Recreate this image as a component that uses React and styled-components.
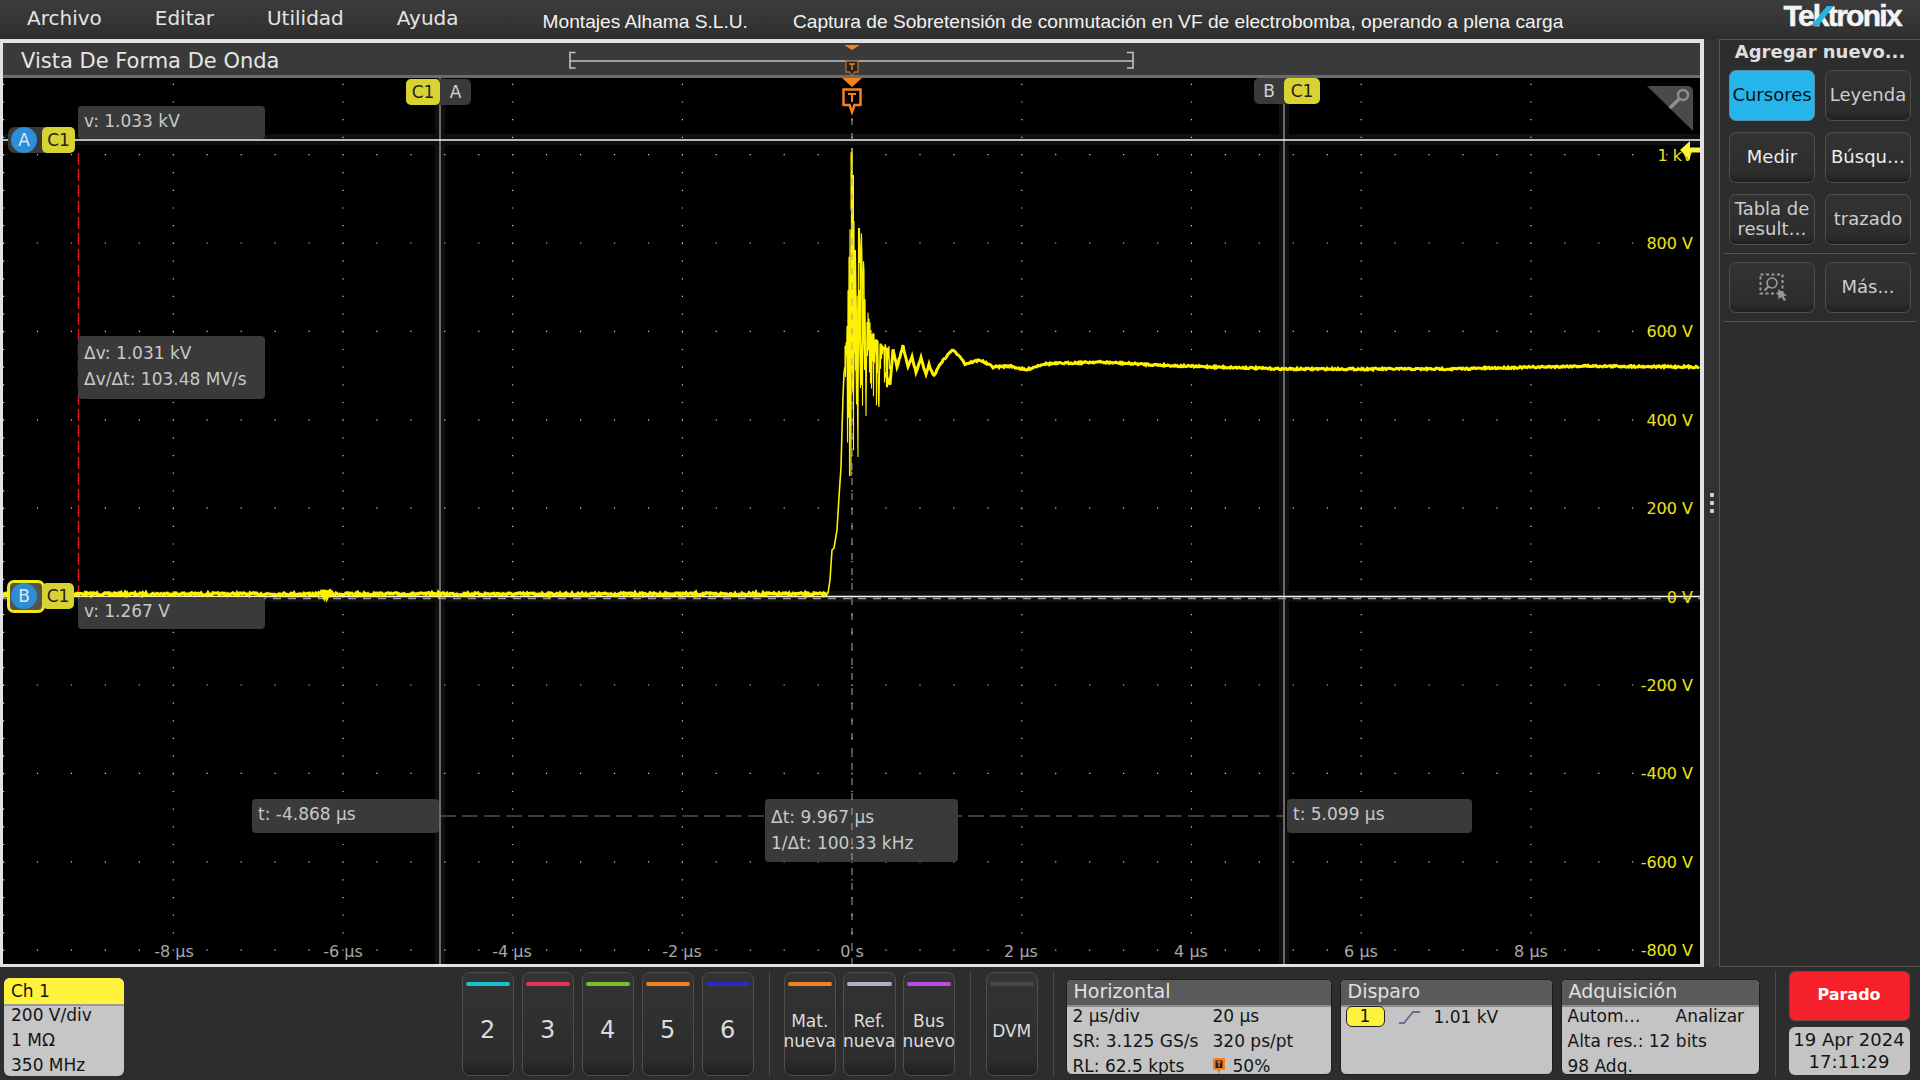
import React from "react";
import styled, { createGlobalStyle } from "styled-components";

const GlobalStyle = createGlobalStyle`
  html, body {
    margin: 0;
    padding: 0;
    background: #2d2d2d;
  }
  body {
    font-family: "DejaVu Sans", "Liberation Sans", sans-serif;
  }
`;

const Screen = styled.div`
  width: 1920px;
  height: 1080px;
  display: grid;
  grid-template-rows: 39px 928px 113px;
  background: #2d2d2d;
  overflow: hidden;
`;

const TopBar = styled.div`
  display: flex;
  align-items: center;
  padding-left: 27px;
  background: linear-gradient(#3d3d3d, #2e2e2e);
`;

const Menu = styled.div`
  display: flex;
  flex: none;
  gap: 53px;
  margin-bottom: 4px;
  font-size: 20px;
  color: #e4e4e4;
`;

const ShotTitle = styled.div`
  flex: none;
  margin-left: ${(p) => p.$gap}px;
  margin-top: 4px;
  font-family: "Liberation Sans", Arial, sans-serif;
  font-size: 19.15px;
  color: #f2f2f2;
  white-space: nowrap;
`;

const Logo = styled.div`
  position: relative;
  flex: none;
  margin-left: auto;
  margin-right: 17px;
  margin-bottom: 8px;
  padding-right: 2px;
  font-family: "Liberation Sans", Arial, sans-serif;
  font-weight: 700;
  font-size: 30px;
  letter-spacing: -1.7px;
  line-height: 31px;
  color: #f4f4f4;
  -webkit-text-stroke: 0.5px #f4f4f4;
  white-space: nowrap;
`;

const LogoSlash = styled.span`
  position: absolute;
  left: 36px;
  top: 6px;
  width: 7px;
  height: 20px;
  background: #27b4e4;
  transform: skewX(-38deg);
`;

const Main = styled.div`
  display: flex;
  height: 928px;
`;

const WaveFrame = styled.div`
  width: 1697px;
  height: 921px;
  border-style: solid;
  border-color: #e2e2e6;
  border-width: 4px 4px 3px 3px;
  display: flex;
  flex-direction: column;
`;

const ViewTitle = styled.div`
  position: relative;
  flex: none;
  height: 32px;
  padding-left: 18px;
  line-height: 37px;
  font-size: 21px;
  color: #e6e6e6;
  background: #3a3a3a;
  border-bottom: 3px solid #6c6c6c;
`;

const OverlaySvg = styled.svg`
  position: absolute;
  left: 0;
  top: 0;
  pointer-events: none;
`;

const Plot = styled.div`
  position: relative;
  flex: 1;
  background: #000;
  overflow: hidden;
`;

const Readout = styled.div`
  position: absolute;
  left: ${(p) => p.$x - 3}px;
  top: ${(p) => p.$y - 78}px;
  width: ${(p) => p.$w}px;
  height: ${(p) => p.$h}px;
  padding: ${(p) => p.$pt}px 6px 0;
  box-sizing: border-box;
  background: #3a3a3a;
  border-radius: 4px;
  font-size: 17px;
  line-height: 26px;
  color: #c8c8c8;
  white-space: nowrap;
`;

const FlagTab = styled.div`
  position: absolute;
  left: ${(p) => p.$x - 3}px;
  top: ${(p) => p.$y - 78}px;
  width: ${(p) => p.$w}px;
  height: 26px;
  background: ${(p) => (p.$channel ? "#d9d233" : "#3a3a3a")};
  color: ${(p) => (p.$channel ? "#222" : "#cfd4dc")};
  border-radius: 5px;
  font-size: 17px;
  line-height: 26px;
  text-align: center;
`;

const FlagBack = styled.div`
  position: absolute;
  left: ${(p) => p.$x - 3}px;
  top: ${(p) => p.$y - 78}px;
  width: ${(p) => p.$w}px;
  height: ${(p) => p.$h}px;
  box-sizing: border-box;
  background: ${(p) => (p.$active ? "#55554a" : "#3a3a3a")};
  border: ${(p) => (p.$active ? "3px solid #f2ea1a" : "none")};
  border-radius: 7px;
`;

const FlagDot = styled.div`
  position: absolute;
  left: ${(p) => p.$x - 13 - 3}px;
  top: ${(p) => p.$y - 13 - 78}px;
  width: 26px;
  height: 26px;
  border-radius: 50%;
  background: #2d8ed6;
  color: #dfe8f2;
  font-size: 17px;
  line-height: 26px;
  text-align: center;
`;

const VoltLabel = styled.div`
  position: absolute;
  right: 7px;
  top: ${(p) => p.$y - 78}px;
  transform: translateY(-50%);
  font-size: 16px;
  color: #eee21a;
  white-space: nowrap;
`;

const TimeLabel = styled.div`
  position: absolute;
  left: ${(p) => p.$x - 3}px;
  top: 873px;
  transform: translate(-50%, -50%);
  font-size: 16px;
  color: #a8a8a8;
  white-space: nowrap;
`;

const Gutter = styled.div`
  width: 15px;
  height: 928px;
  background: #333;
  display: flex;
  flex-direction: column;
  align-items: center;
  justify-content: center;
  gap: 4px;
`;

const GutterDot = styled.span`
  width: 4px;
  height: 4px;
  border-radius: 1px;
  background: #d0d0d0;
`;

const SidePanel = styled.div`
  flex: 1;
  box-sizing: border-box;
  border: 1px solid #5a5650;
  border-right: none;
  background: #2d2d2d;
`;

const SideTitle = styled.div`
  height: 30px;
  line-height: 23px;
  text-align: center;
  font-weight: 700;
  font-size: 18px;
  color: #dedede;
  white-space: nowrap;
`;

const SideGrid = styled.div`
  display: grid;
  grid-template-columns: 86px 86px;
  grid-auto-rows: 51px;
  column-gap: 10px;
  row-gap: 11px;
  padding-left: 9px;
`;

const SideButton = styled.div`
  display: flex;
  align-items: center;
  justify-content: center;
  box-sizing: border-box;
  padding-bottom: 2px;
  text-align: center;
  font-size: 18px;
  line-height: 20px;
  border-radius: 7px;
  border: 1.5px solid ${(p) => (p.$active ? "#5a8ca8" : "#524e4a")};
  background: ${(p) =>
    p.$active ? "#25b5ea" : "linear-gradient(#333 0%, #2d2d2d 82%, #1f1f1f 100%)"};
  color: ${(p) => (p.$active ? "#06121a" : p.$bright ? "#ededed" : "#cdcdcd")};
  white-space: nowrap;
  overflow: hidden;
`;

const SideRule = styled.div`
  height: 1px;
  margin: 8px 4px;
  background: #5a5650;
`;

const BottomBar = styled.div`
  display: flex;
  align-items: flex-start;
  padding: 5px 0 0 4px;
`;

const ChannelBadge = styled.div`
  width: 120px;
  height: 98px;
  margin-top: 6px;
  border-radius: 6px;
  overflow: hidden;
  background: #c6c6c6;
  color: #141414;
  font-size: 17px;
`;

const BadgeHeader = styled.div`
  height: 26px;
  line-height: 26px;
  padding-left: 7px;
  background: #fff23c;
  border-bottom: 2px solid #9a9a9a;
`;

const InfoRow = styled.div`
  display: grid;
  grid-template-columns: ${(p) => p.$cols || "1fr"};
  height: 25px;
  line-height: 25px;
  white-space: nowrap;
`;

const BadgeBody = styled.div`
  padding-left: 7px;
  margin-top: -3px;
`;

const Group = styled.div`
  display: flex;
  gap: ${(p) => p.$gap}px;
  margin-left: ${(p) => p.$left || 0}px;
`;

const Divider = styled.div`
  width: 1px;
  height: 104px;
  margin: 0 ${(p) => p.$after}px 0 ${(p) => p.$before}px;
  background: #4c4c4c;
`;

const AddButton = styled.div`
  position: relative;
  box-sizing: border-box;
  width: 52.5px;
  height: 104px;
  border-radius: 8px;
  border: 1.5px solid #524e4a;
  background: linear-gradient(#333 0%, #2d2d2d 85%, #1f1f1f 100%);
  color: #dcdcdc;
  display: flex;
  align-items: center;
  justify-content: center;
  padding-top: ${(p) => (p.$big ? 12 : 14)}px;
  text-align: center;
  font-size: ${(p) => (p.$big ? 24 : 17)}px;
  line-height: 20px;
  overflow: visible;
`;

const ColorBar = styled.span`
  position: absolute;
  left: 3px;
  right: 3px;
  top: 9px;
  height: 4px;
  border-radius: 2px;
  background: ${(p) => p.$color};
`;

const SettingsPanel = styled.div`
  width: ${(p) => p.$w}px;
  height: 96px;
  margin: 7px ${(p) => p.$right || 0}px 0 0;
  box-sizing: border-box;
  border: 1px solid #1c1c1c;
  border-radius: 6px;
  overflow: hidden;
  background: #c4c4c4;
  color: #151515;
  font-size: 17px;
`;

const PanelHeader = styled.div`
  height: 25px;
  line-height: 23px;
  padding-left: 7px;
  font-size: 19px;
  color: #e0e0e0;
  background: #5a5a5a;
  border-bottom: 2px solid #8c8c8c;
`;

const PanelBody = styled.div`
  padding-left: 6px;
  margin-top: -3px;
`;

const TriggerRow = styled.div`
  display: flex;
  align-items: center;
  height: 21px;
  margin-top: -1px;
  padding-left: 5px;
`;

const SourceChip = styled.span`
  box-sizing: border-box;
  width: 39px;
  height: 21px;
  line-height: 18px;
  text-align: center;
  background: #fff23c;
  border: 1px solid #222;
  border-radius: 6px;
  margin-right: 14px;
`;

const RunColumn = styled.div`
  display: flex;
  flex-direction: column;
  gap: 6px;
  width: 121px;
`;

const RunButton = styled.div`
  height: 50px;
  line-height: 46px;
  margin-top: -1px;
  border-radius: 6px;
  background: #f5202a;
  border: 1px solid #6b4a4a;
  box-sizing: border-box;
  text-align: center;
  font-weight: 700;
  font-size: 16px;
  color: #fff;
`;

const DateBox = styled.div`
  height: 48px;
  border-radius: 6px;
  background: #c4c4c4;
  color: #151515;
  font-size: 18px;
  line-height: 22px;
  text-align: center;
  padding-top: 2px;
  box-sizing: border-box;
  white-space: nowrap;
`;

const IconSlot = styled.span`
  display: inline-flex;
  margin-left: 3px;
`;

// small seeded generator so the trace looks the same on every render
let seed = 7;
const rnd = () => {
  seed = (seed * 16807) % 2147483647;
  return (seed - 1) / 2147483646;
};

const lerpAt = (pts, x) => {
  for (let i = 1; i < pts.length; i++) {
    if (x <= pts[i][0]) {
      const [x0, y0] = pts[i - 1];
      const [x1, y1] = pts[i];
      return y0 + ((y1 - y0) * (x - x0)) / (x1 - x0);
    }
  }
  return pts[pts.length - 1][1];
};

const upper = [
  [846, 345], [849, 250], [851, 165], [852, 148], [853, 170], [855, 240], [858, 228],
  [860, 228], [862, 235], [864, 270], [867, 300], [871, 330], [875, 335], [880, 345], [890, 350],
];
const lower = [
  [846, 440], [849, 476], [852, 476], [855, 425], [858, 457], [861, 420], [866, 416],
  [870, 385], [876, 405], [879, 407], [882, 380], [888, 390], [890, 385],
];
const settle = [
  [885, 372], [890, 385], [893, 350], [897, 367], [903, 346], [908, 367], [912, 356], [916, 373],
  [921, 358], [926, 375], [929, 365], [934, 376], [940, 364], [952, 350], [960, 356], [965, 364],
  [972, 362], [980, 360], [993, 367], [1010, 366], [1026, 370], [1043, 364], [1097, 362],
  [1180, 366], [1286, 369], [1450, 369], [1586, 366], [1700, 367],
];

// extremes that have to land exactly where the reference has them
const forcedPeaks = [851.5, 852, 858.5, 859.5, 861.5, 863.5];
const forcedDips = [849.5, 851, 858, 866, 876.5, 879];

const buildBaseline = () => {
  let d = "M3 594";
  for (let x = 3; x < 828; x += 1) {
    const blip = Math.abs(x - 326) < 5 ? 3 : 0;
    d += `L${x} ${(594 + (rnd() - 0.5) * (2.4 + blip * 2)).toFixed(1)}`;
  }
  return d;
};

const buildRise = () =>
  "M826 594L828 593L830 580L832 550L834 548L837 530L839 497L841 467L842 430L843 397L844 373L845 367";

const spikeCore =
  "M851.500 152V210M853 175V262M850 275L853 392L855 250L857 400L859 290L861 385L864 300L865 370";

const buildRing = () => {
  let d = "M845 367";
  let up = true;
  for (let x = 845; x < 890; x += 0.5) {
    const t = lerpAt(upper, x);
    const b = lerpAt(lower, x);
    const mid = 340;
    const r = rnd();
    let y = up ? t + (mid - t) * r * r : b + (mid - b) * r * 0.9;
    if (forcedPeaks.includes(x)) y = t;
    if (forcedDips.includes(x)) y = b;
    d += `L${x} ${y.toFixed(1)}`;
    up = !up;
  }
  return d;
};

const buildSettle = () => {
  let d = "";
  for (let x = 885; x < 1700; x += 1) {
    const y = lerpAt(settle, x) + (rnd() - 0.5) * 1.8;
    d += `${d ? "L" : "M"}${x} ${y.toFixed(1)}`;
  }
  return d;
};

const buildGraticule = () => {
  let d = "";
  const cols = [];
  for (let k = -5; k <= 5; k++) cols.push(851.5 + k * 169.7);
  for (let k = -5; k <= 4; k++) {
    const y = 596 + k * 88.4;
    for (let s = 0; s <= 50; s++) {
      d += `M${(3 + s * 33.94).toFixed(1)} ${y.toFixed(1)}h1.2v1.2h-1.2z`;
    }
  }
  cols.forEach((x) => {
    for (let s = 0; s < 50; s++) {
      const y = 66 + s * 17.68;
      if (y > 78) d += `M${x.toFixed(1)} ${y.toFixed(1)}h1.2v1.2h-1.2z`;
    }
  });
  return d;
};

const graticule = buildGraticule();
const baseline = buildBaseline();
const rise = buildRise();
const ring = buildRing();
const settled = buildSettle();

const voltLabels = [
  ["1 kV", 155], ["800 V", 243], ["600 V", 331], ["400 V", 420], ["200 V", 508], ["0 V", 597],
  ["-200 V", 685], ["-400 V", 773], ["-600 V", 862], ["-800 V", 950],
];
const timeLabels = [
  ["-8 µs", 174], ["-6 µs", 343], ["-4 µs", 512], ["-2 µs", 682], ["0 s", 852],
  ["2 µs", 1021], ["4 µs", 1191], ["6 µs", 1361], ["8 µs", 1531],
];

const TriggerMark = () => (
  <g>
    <path d="M842 78h20l-10 9z" fill="#f58220" />
    <path
      d="M843.5 89.5h17v15.5h-6l-2.500 7-2.500-7h-6z"
      fill="#000"
      stroke="#f58220"
      strokeWidth="2.500"
    />
    <path d="M848 94h8M852 94v8" stroke="#f58220" strokeWidth="2" />
  </g>
);

const PlotBase = () => (
  <OverlaySvg width="1697" height="886" viewBox="3 78 1697 886">
    <rect x="3" y="134" width="1697" height="11" fill="#0f0f0f" />
    <rect x="3" y="591" width="1697" height="11" fill="#0f0f0f" />
    <rect x="435" y="78" width="10" height="886" fill="#0f0f0f" />
    <rect x="1279" y="78" width="10" height="886" fill="#0f0f0f" />
    <path d={graticule} fill="#cfcfcf" />
    <path d="M440 78V964M1284 78V964" stroke="#a8a8a8" strokeWidth="1.200" />
    <path d="M3 140H1700" stroke="#f4f4f4" strokeWidth="1.500" />
    <path d="M3 596.500H1700" stroke="#f4f4f4" strokeWidth="1.300" />
    <path d="M3 598.500H1700" stroke="#999" strokeWidth="1.300" strokeDasharray="8 7" />
    <path d="M78.500 153V596" stroke="#e01818" strokeWidth="1.500" strokeDasharray="12 4" />
    <path d="M440 816H1284" stroke="#777" strokeWidth="1.200" strokeDasharray="16 6" />
    <path d="M1647 86H1688a5 5 0 0 1 5 5V131z" fill="#4a4a4a" />
    <circle cx="1683" cy="95" r="5" fill="none" stroke="#8e8e8e" strokeWidth="2.500" />
    <path d="M1679 99L1671 107" stroke="#8e8e8e" strokeWidth="3.500" strokeLinecap="round" />
  </OverlaySvg>
);

const PlotTop = () => (
  <OverlaySvg width="1697" height="886" viewBox="3 78 1697 886">
    <path d={baseline} fill="none" stroke="#fff200" strokeWidth="3.200" />
    <path d={rise} fill="none" stroke="#fff200" strokeWidth="1.600" />
    <path d={ring} fill="none" stroke="#fff200" strokeWidth="1.100" />
    <path d={spikeCore} fill="none" stroke="#fff200" strokeWidth="2" />
    <path d={settled} fill="none" stroke="#fff200" strokeWidth="3" />
    <path d="M852 118V964" stroke="#a4a4a4" strokeWidth="1" strokeDasharray="7 8" />
    <TriggerMark />
    <path d="M1680 150L1690 141V147.500H1700V152.500H1690V160z" fill="#fff23c" />
  </OverlaySvg>
);

const ZoomSelectIcon = () => (
  <svg width="30" height="28" viewBox="0 0 30 28">
    <rect
      x="1.500" y="1.500" width="22" height="19"
      fill="none" stroke="#9a9a9a" strokeWidth="2" strokeDasharray="3 2.500"
    />
    <circle cx="13" cy="10" r="5" fill="none" stroke="#9a9a9a" strokeWidth="1.600" />
    <path d="M9.500 13.500L5.500 17.500" stroke="#9a9a9a" strokeWidth="2" />
    <path d="M19 16L28 22.500L24.500 23L27 27L25 28L22.500 24L19.500 26z" fill="#9a9a9a" />
  </svg>
);

const SlopeIcon = () => (
  <svg width="22" height="14" viewBox="0 0 22 14" style={{ marginRight: 13 }}>
    <path d="M0 13H5L14 2H21" fill="none" stroke="#6a6a92" strokeWidth="1.800" />
  </svg>
);

const PositionIcon = () => (
  <svg width="12" height="16" viewBox="0 0 12 16" style={{ marginRight: 8, verticalAlign: -2 }}>
    <path d="M0 0H12V12H8L6 16L4 12H0z" fill="#f58220" />
    <path d="M2.500 2.500H9.500V10H2.500z" fill="#222" />
    <path d="M4 4H8M6 4V9" stroke="#f58220" strokeWidth="1.300" />
  </svg>
);

export default function App() {
  return (
    <>
      <GlobalStyle />
      <Screen>
        <TopBar>
          <Menu>
            <span>Archivo</span>
            <span>Editar</span>
            <span>Utilidad</span>
            <span>Ayuda</span>
          </Menu>
          <ShotTitle $gap={84}>Montajes Alhama S.L.U.</ShotTitle>
          <ShotTitle $gap={45}>
            Captura de Sobretensión de conmutación en VF de electrobomba, operando a plena carga
          </ShotTitle>
          <Logo>
            Tektronix
            <LogoSlash />
          </Logo>
        </TopBar>

        <Main>
          <WaveFrame>
            <ViewTitle>
              Vista De Forma De Onda
              <OverlaySvg width="1697" height="35" viewBox="3 43 1697 35">
                <path
                  d="M575.500 52.500H570V68H575.500M570 61H1133M1127 52.500H1133V68H1127"
                  fill="none"
                  stroke="#c4c4c4"
                  strokeWidth="1.600"
                />
                <path d="M844 45H860L852 50z" fill="#f58220" />
                <path
                  d="M846 61H858V72H854.500L852 76L849.500 72H846z"
                  fill="#222"
                  stroke="#b8662a"
                  strokeWidth="1.400"
                />
                <path d="M849 64H855M852 64V70" stroke="#f58220" strokeWidth="1.400" />
              </OverlaySvg>
            </ViewTitle>
            <Plot>
              <PlotBase />
              <FlagTab $x={406} $y={79} $w={65}>
                <span style={{ marginLeft: 34 }}>A</span>
              </FlagTab>
              <FlagTab $x={406} $y={79} $w={34} $channel>C1</FlagTab>
              <FlagTab $x={1254} $y={78} $w={60}>
                <span style={{ marginRight: 30 }}>B</span>
              </FlagTab>
              <FlagTab $x={1284} $y={78} $w={36} $channel>C1</FlagTab>

              <FlagBack $x={8} $y={127} $w={50} $h={26} />
              <FlagDot $x={24} $y={140}>A</FlagDot>
              <FlagTab $x={42} $y={127} $w={33} $channel>C1</FlagTab>

              <Readout $x={78} $y={106} $w={187} $h={33} $pt={2}>v: 1.033 kV</Readout>
              <Readout $x={78} $y={336} $w={187} $h={63} $pt={4}>
                Δv: 1.031 kV
                <br />
                Δv/Δt: 103.48 MV/s
              </Readout>
              <Readout $x={78} $y={597} $w={187} $h={32} $pt={1}>v: 1.267 V</Readout>
              <Readout $x={252} $y={799} $w={187} $h={34} $pt={2}>t: -4.868 µs</Readout>
              <Readout $x={765} $y={799} $w={193} $h={63} $pt={5}>
                Δt: 9.967 µs
                <br />
                1/Δt: 100.33 kHz
              </Readout>
              <Readout $x={1287} $y={799} $w={185} $h={34} $pt={2}>t: 5.099 µs</Readout>

              {voltLabels.map(([text, y]) => (
                <VoltLabel key={text} $y={y}>{text}</VoltLabel>
              ))}
              {timeLabels.map(([text, x]) => (
                <TimeLabel key={text} $x={x}>{text}</TimeLabel>
              ))}
              <PlotTop />
              <FlagBack $x={7} $y={580} $w={38} $h={33} $active />
              <FlagDot $x={24} $y={596}>B</FlagDot>
              <FlagTab $x={42} $y={583} $w={32} $channel>C1</FlagTab>
            </Plot>
          </WaveFrame>

          <Gutter>
            <GutterDot />
            <GutterDot />
            <GutterDot />
          </Gutter>

          <SidePanel>
            <SideTitle>Agregar nuevo...</SideTitle>
            <SideGrid>
              <SideButton $active>Cursores</SideButton>
              <SideButton>Leyenda</SideButton>
              <SideButton $bright>Medir</SideButton>
              <SideButton $bright>Búsqu…</SideButton>
              <SideButton>
                Tabla de
                <br />
                result…
              </SideButton>
              <SideButton>trazado</SideButton>
            </SideGrid>
            <SideRule />
            <SideGrid>
              <SideButton><IconSlot><ZoomSelectIcon /></IconSlot></SideButton>
              <SideButton>Más...</SideButton>
            </SideGrid>
            <SideRule />
          </SidePanel>
        </Main>

        <BottomBar>
          <ChannelBadge>
            <BadgeHeader>Ch 1</BadgeHeader>
            <BadgeBody>
              <InfoRow>200 V/div</InfoRow>
              <InfoRow>1 MΩ</InfoRow>
              <InfoRow>350 MHz</InfoRow>
            </BadgeBody>
          </ChannelBadge>

          <Group $gap={7.5} $left={337.5}>
            <AddButton $big><ColorBar $color="#19c4cc" />2</AddButton>
            <AddButton $big><ColorBar $color="#e8325a" />3</AddButton>
            <AddButton $big><ColorBar $color="#7fbf26" />4</AddButton>
            <AddButton $big><ColorBar $color="#f58220" />5</AddButton>
            <AddButton $big><ColorBar $color="#2a2ac0" />6</AddButton>
          </Group>
          <Divider $before={14.5} $after={14} />
          <Group $gap={7}>
            <AddButton><ColorBar $color="#f58220" />Mat.<br />nueva</AddButton>
            <AddButton><ColorBar $color="#aab2c0" />Ref.<br />nueva</AddButton>
            <AddButton><ColorBar $color="#b94ce8" />Bus<br />nuevo</AddButton>
          </Group>
          <Divider $before={14.5} $after={15} />
          <AddButton><ColorBar $color="#484848" />DVM</AddButton>
          <Divider $before={15} $after={11.5} />

          <SettingsPanel $w={266} $right={8}>
            <PanelHeader>Horizontal</PanelHeader>
            <PanelBody>
              <InfoRow $cols="140px 1fr">
                <span>2 µs/div</span>
                <span>20 µs</span>
              </InfoRow>
              <InfoRow $cols="140px 1fr">
                <span>SR: 3.125 GS/s</span>
                <span>320 ps/pt</span>
              </InfoRow>
              <InfoRow $cols="140px 1fr">
                <span>RL: 62.5 kpts</span>
                <span><PositionIcon />50%</span>
              </InfoRow>
            </PanelBody>
          </SettingsPanel>

          <SettingsPanel $w={213} $right={8}>
            <PanelHeader>Disparo</PanelHeader>
            <TriggerRow>
              <SourceChip>1</SourceChip>
              <SlopeIcon />
              <span>1.01 kV</span>
            </TriggerRow>
          </SettingsPanel>

          <SettingsPanel $w={199}>
            <PanelHeader>Adquisición</PanelHeader>
            <PanelBody>
              <InfoRow $cols="108px 1fr">
                <span>Autom…</span>
                <span>Analizar</span>
              </InfoRow>
              <InfoRow>Alta res.: 12 bits</InfoRow>
              <InfoRow>98 Adq.</InfoRow>
            </PanelBody>
          </SettingsPanel>

          <Divider $before={15} $after={13} />
          <RunColumn>
            <RunButton>Parado</RunButton>
            <DateBox>
              19 Apr 2024
              <br />
              17:11:29
            </DateBox>
          </RunColumn>
        </BottomBar>
      </Screen>
    </>
  );
}
